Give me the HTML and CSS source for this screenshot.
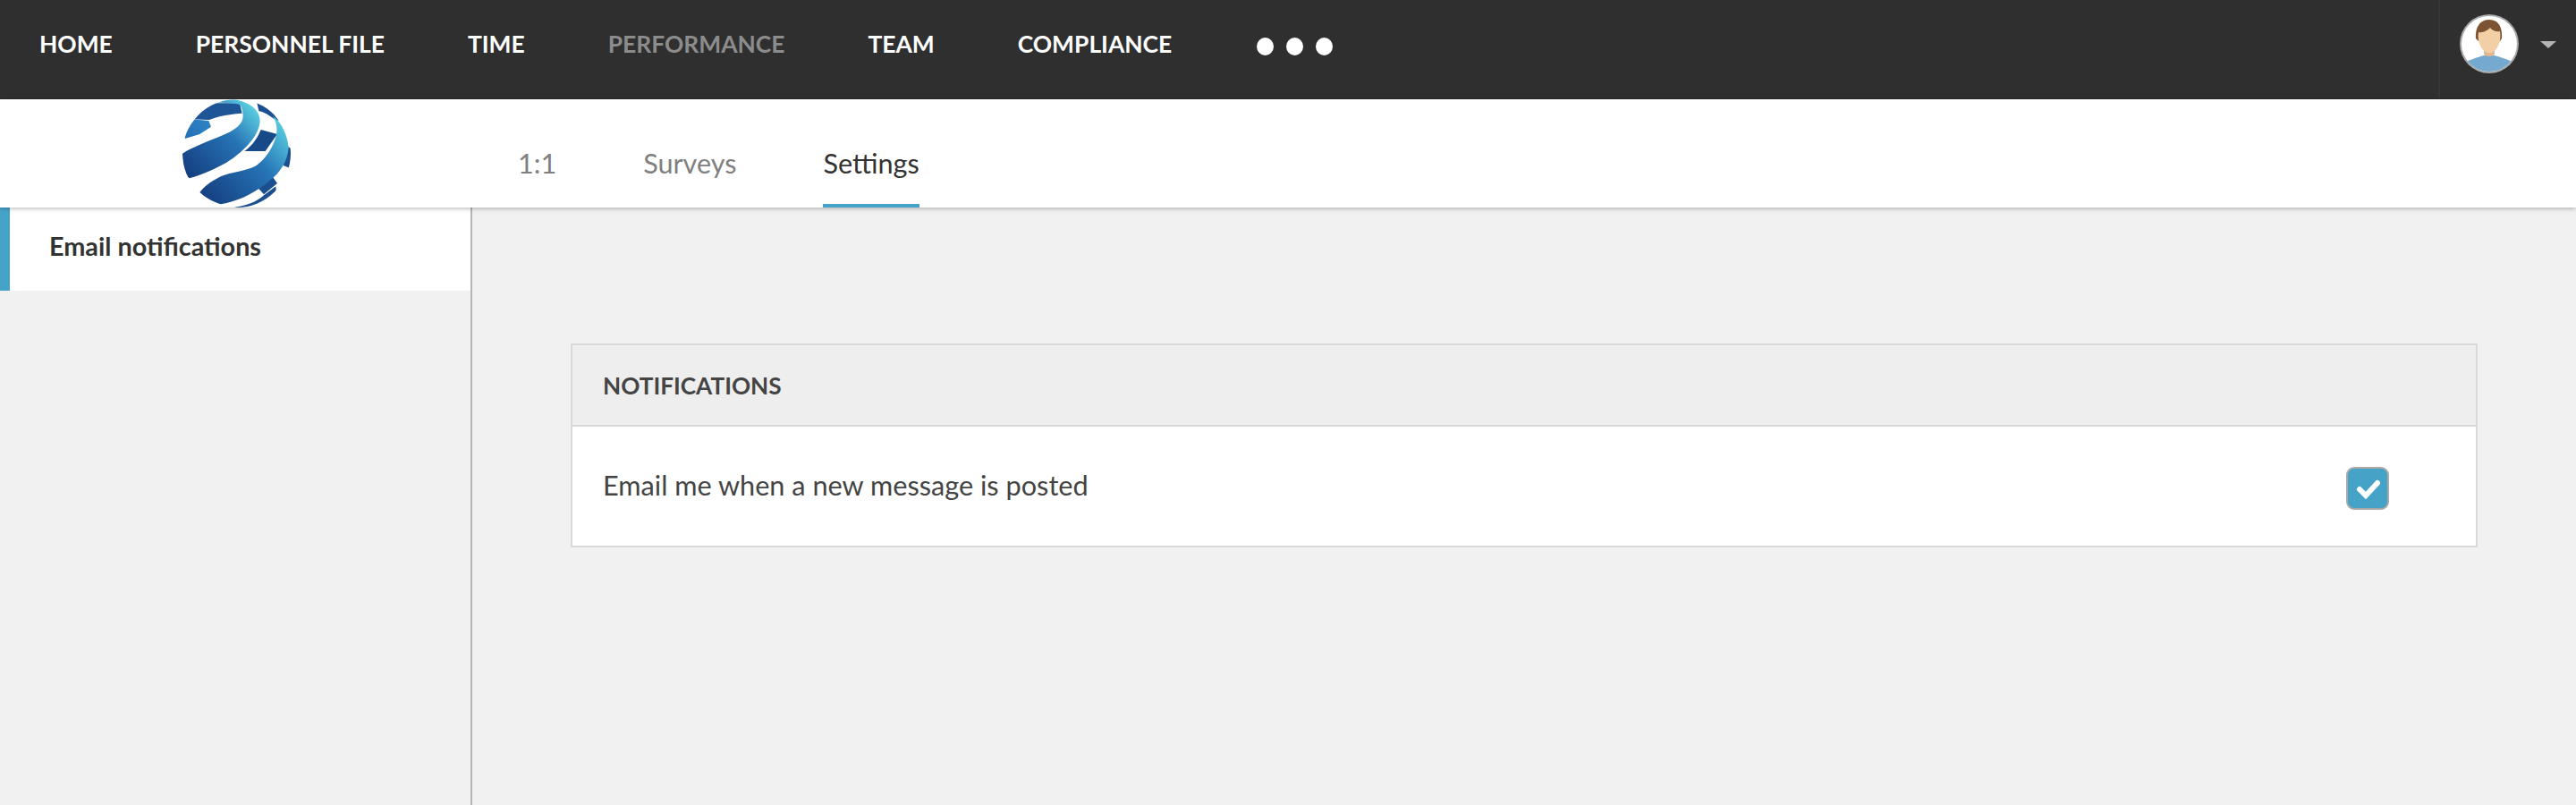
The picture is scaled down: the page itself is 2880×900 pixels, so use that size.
FILE: index.html
```html
<!DOCTYPE html>
<html lang="en">
<head>
<meta charset="utf-8">
<title>Settings</title>
<link rel="stylesheet" href="styles.css">
</head>
<body>
<header class="topnav">
  <nav class="topnav-links">
    <a class="topnav-link">HOME</a>
    <a class="topnav-link">PERSONNEL FILE</a>
    <a class="topnav-link">TIME</a>
    <a class="topnav-link is-current">PERFORMANCE</a>
    <a class="topnav-link">TEAM</a>
    <a class="topnav-link">COMPLIANCE</a>
    <span class="more"><i class="dot"></i><i class="dot"></i><i class="dot"></i></span>
  </nav>
  <div class="user">
    <svg class="avatar" viewBox="0 0 66 66" width="66" height="66">
      <defs><clipPath id="avatarClip"><circle cx="33" cy="33" r="31"/></clipPath></defs>
      <circle cx="33" cy="33" r="33" fill="#a9a9a9"/>
      <circle cx="33" cy="33" r="31" fill="#fff"/>
      <g clip-path="url(#avatarClip)">
        <path d="M3 56C9 51 20 48 27 46H39C46 48 56 51 62 55V70H3Z" fill="#76a9cf"/>
        <path d="M27 36H39V44C39 48 27 48 27 44Z" fill="#e3b78f"/>
        <path d="M18 27C17 14 23 6 33 6C43 6 48 14 47 27L45 30H21Z" fill="#7d5433"/>
        <path d="M21 20C26 21 31 18 34 15C36 18 41 20 45 19C46 26 45 32 42 37C39 42 35 43 33 43C31 43 27 42 24 37C21 32 20 26 21 20Z" fill="#f3cfa5"/>
      </g>
    </svg>
    <span class="caret"></span>
  </div>
</header>
<section class="subnav">
  <div class="logo-slot">
    <svg class="logo" viewBox="72 33 363 363" width="121" height="121">
      <defs>
        <clipPath id="globe"><circle cx="253.5" cy="214.5" r="181.5"/></clipPath>
        <linearGradient id="sw1" x1="85" y1="280" x2="320" y2="60" gradientUnits="userSpaceOnUse">
          <stop offset="0" stop-color="#143f80"/><stop offset=".6" stop-color="#2674b6"/><stop offset="1" stop-color="#5ed3e2"/>
        </linearGradient>
        <linearGradient id="sw2" x1="150" y1="370" x2="420" y2="130" gradientUnits="userSpaceOnUse">
          <stop offset="0" stop-color="#143f80"/><stop offset=".6" stop-color="#2674b6"/><stop offset="1" stop-color="#58cbdf"/>
        </linearGradient>
        <linearGradient id="sw3" x1="85" y1="160" x2="165" y2="105" gradientUnits="userSpaceOnUse">
          <stop offset="0" stop-color="#2470b5"/><stop offset="1" stop-color="#2f86c6"/>
        </linearGradient>
      </defs>
      <g clip-path="url(#globe)">
        <path d="M105 100C125 75 150 55 180 46L264 46L272 80C240 82 195 88 162 102Z" fill="#1d5596"/>
        <path d="M80 165C78 140 90 115 105 100L160 105L168 125L130 150Z" fill="url(#sw3)"/>
        <path d="M322 45C350 55 375 75 395 105L380 100C362 85 345 75 328 72Z" fill="#1b4f8f"/>
        <path d="M335 135L390 150L350 207H280C310 185 325 160 335 135Z" fill="#174a88"/>
        <path d="M415 185L440 200L436 265L410 255Z" fill="#1b4f8f"/>
        <path d="M365 280L390 315L345 352L320 325Z" fill="#1b4f8f"/>
        <path d="M245 396C285 390 320 378 345 355L385 325L390 400Z" fill="#1b4f8f"/>
        <path d="M175 42C200 35 235 33 255 35C300 45 332 70 332 105C330 150 290 195 240 232C195 262 140 285 95 298C82 285 72 262 72 215C110 190 170 170 215 150C250 135 275 115 275 90C275 70 270 55 262 50C235 45 200 45 175 42Z" fill="url(#sw1)"/>
        <path d="M375 90C400 105 425 150 428 195C425 240 400 280 365 305C320 345 260 375 200 385C170 375 145 360 130 345C150 320 175 305 200 292C240 275 285 275 320 255C350 235 375 195 385 160C392 135 388 110 375 90Z" fill="url(#sw2)"/>
      </g>
    </svg>
  </div>
  <nav class="tabs">
    <a class="tab">1:1</a>
    <a class="tab">Surveys</a>
    <a class="tab is-active">Settings</a>
  </nav>
</section>
<div class="layout">
  <aside class="sidebar">
    <a class="side-item">Email notifications</a>
  </aside>
  <main class="content">
    <section class="card">
      <h2 class="card-head">NOTIFICATIONS</h2>
      <div class="card-row">
        <span class="row-label">Email me when a new message is posted</span>
        <span class="checkbox">
          <svg viewBox="0 0 44 44" width="44" height="44"><path d="M13 23L20 30L33 16" fill="none" stroke="#fff" stroke-width="6" stroke-linecap="round" stroke-linejoin="miter"/></svg>
        </span>
      </div>
    </section>
  </main>
</div>
</body>
</html>
```
FILE: styles.css
```css
* { box-sizing: border-box; }
html, body { height: 100%; }
body {
  margin: 0;
  height: 900px;
  overflow: hidden;
  display: flex;
  flex-direction: column;
  background: #f1f1f1;
  color: #333;
  font-family: Lato, "Liberation Sans", sans-serif;
}
.topnav {
  flex: 0 0 111px;
  display: flex;
  justify-content: space-between;
  background: #2f2f2f;
}
.topnav-links {
  display: flex;
  align-items: flex-start;
  gap: 93px;
  padding: 32px 0 0 44px;
}
.topnav-link {
  color: #fff;
  font-size: 26.4px;
  font-weight: 700;
  line-height: 34px;
  white-space: nowrap;
}
.topnav-link.is-current { color: #8c8c8c; }
.more {
  display: flex;
  gap: 14px;
  padding-top: 10px;
  margin-left: 2px;
}
.dot {
  width: 19px;
  height: 20px;
  border-radius: 50%;
  background: #fff;
}
.user {
  display: flex;
  align-items: flex-start;
  width: 154px;
  padding: 16px 22px 0;
  gap: 24px;
  border-left: 2px solid #363636;
}
.avatar { flex: none; display: block; }
.caret {
  margin-top: 30px;
  flex: none;
  width: 0;
  height: 0;
  border-left: 9px solid transparent;
  border-right: 9px solid transparent;
  border-top: 8px solid #b4b4b4;
}
.subnav {
  flex: 0 0 121px;
  display: flex;
  position: relative;
  z-index: 1;
  background: #fff;
  box-shadow: 0 1px 5px rgba(0, 0, 0, .3);
}
.logo-slot {
  flex: 0 0 579px;
  padding-left: 204px;
}
.logo { display: block; filter: blur(.6px); }
.tabs { display: flex; gap: 97px; }
.tab {
  padding-top: 53px;
  height: 121px;
  font-size: 30.6px;
  line-height: 38px;
  color: #808080;
}
.tab.is-active {
  color: #333;
  border-bottom: 4px solid #46a3c8;
}
.layout { flex: 1; display: flex; min-height: 0; }
.sidebar {
  flex: 0 0 528px;
  border-right: 2px solid #b5b5b5;
}
.side-item {
  display: block;
  height: 93px;
  padding: 26px 0 0 44px;
  border-left: 11px solid #46a3c8;
  background: #fff;
  font-size: 28.8px;
  font-weight: 700;
  line-height: 34px;
  color: #333;
}
.content {
  flex: 1;
  padding: 152px 110px 0 110px;
}
.card {
  border: 2px solid #d9d9d9;
  background: #fff;
}
.card-head {
  margin: 0;
  height: 91px;
  padding: 29px 0 0 34px;
  background: #eee;
  border-bottom: 2px solid #d9d9d9;
  font-size: 26.2px;
  font-weight: 700;
  line-height: 32px;
  color: #444;
}
.card-row {
  height: 133px;
  display: flex;
  align-items: center;
  justify-content: space-between;
  padding: 0 97px 0 34px;
}
.row-label {
  font-size: 30.7px;
  line-height: 38px;
  margin-top: -2px;
  color: #444;
}
.checkbox {
  width: 48px;
  height: 48px;
  margin-top: 5px;
  border: 2px solid #a9a9a9;
  border-radius: 9px;
  background: #46a3c8;
}
.checkbox svg { display: block; }
```
